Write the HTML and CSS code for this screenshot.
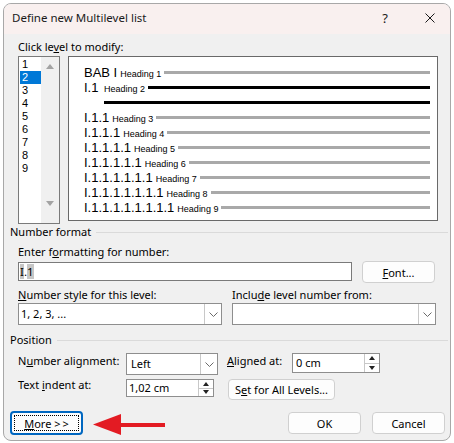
FILE: index.html
```html
<!DOCTYPE html>
<html>
<head>
<meta charset="utf-8">
<link rel="stylesheet" href="styles.css">
</head>
<body>
<div class="dialog">
  <div class="titlebar">
    <span class="title">Define new Multilevel list</span>
    <span class="help">?</span>
    <span class="close"><svg width="10" height="10" viewBox="0 0 10 10"><path d="M0.5 0.5 L9.5 9.5 M9.5 0.5 L0.5 9.5" stroke="#1a1a1a" stroke-width="1"/></svg></span>
  </div>
  <div class="body">
    <div class="lbl top-lbl">Click le<u>v</u>el to modify:</div>
    <div class="levels">
      <div class="listbox">
        <ul class="items">
          <li>1</li><li class="sel">2</li><li>3</li><li>4</li><li>5</li><li>6</li><li>7</li><li>8</li><li>9</li>
        </ul>
        <div class="scroll">
          <span class="tri up"></span>
          <span class="tri down"></span>
        </div>
      </div>
      <div class="preview">
        <div class="row"><span class="num">BAB I</span><span class="hd">Heading 1</span><i class="ln"></i></div>
        <div class="row"><span class="num n2">I.1</span><span class="hd h2">Heading 2</span><i class="ln bold"></i></div>
        <div class="row blank"><i class="ln bold"></i></div>
        <div class="row"><span class="num">I.1.1</span><span class="hd">Heading 3</span><i class="ln"></i></div>
        <div class="row"><span class="num">I.1.1.1</span><span class="hd">Heading 4</span><i class="ln"></i></div>
        <div class="row"><span class="num">I.1.1.1.1</span><span class="hd">Heading 5</span><i class="ln"></i></div>
        <div class="row"><span class="num">I.1.1.1.1.1</span><span class="hd">Heading 6</span><i class="ln"></i></div>
        <div class="row"><span class="num">I.1.1.1.1.1.1</span><span class="hd">Heading 7</span><i class="ln"></i></div>
        <div class="row"><span class="num">I.1.1.1.1.1.1.1</span><span class="hd">Heading 8</span><i class="ln"></i></div>
        <div class="row"><span class="num">I.1.1.1.1.1.1.1.1</span><span class="hd">Heading 9</span><i class="ln"></i></div>
      </div>
    </div>

    <div class="group"><span>Number format</span><i class="rule"></i></div>
    <div class="section">
      <div class="lbl gap4">Enter f<u>o</u>rmatting for number:</div>
      <div class="fmt-row">
        <div class="textbox"><span class="shade">I</span>.<span class="shade">1</span></div>
        <div class="btn font-btn"><span><u>F</u>ont...</span></div>
      </div>
      <div class="two-col gap4">
        <div class="lbl"><u>N</u>umber style for this level:</div>
        <div class="lbl">Inclu<u>d</u>e level number from:</div>
      </div>
      <div class="two-col">
        <div class="select"><span class="val">1, 2, 3, ...</span><span class="dd"><svg width="9" height="5" viewBox="0 0 9 5"><path d="M0.5 0.5 L4.5 4.5 L8.5 0.5" fill="none" stroke="#6a6a6a" stroke-width="1"/></svg></span></div>
        <div class="select"><span class="val"></span><span class="dd"><svg width="9" height="5" viewBox="0 0 9 5"><path d="M0.5 0.5 L4.5 4.5 L8.5 0.5" fill="none" stroke="#6a6a6a" stroke-width="1"/></svg></span></div>
      </div>
    </div>

    <div class="group pos-group"><span>Position</span><i class="rule"></i></div>
    <div class="section">
      <div class="pos-row r1">
        <div class="lbl plbl">N<u>u</u>mber alignment:</div>
        <div class="select align-sel"><span class="val v4">Left</span><span class="dd"><svg width="9" height="5" viewBox="0 0 9 5"><path d="M0.5 0.5 L4.5 4.5 L8.5 0.5" fill="none" stroke="#6a6a6a" stroke-width="1"/></svg></span></div>
        <div class="lbl alabel"><u>A</u>ligned at:</div>
        <div class="spin s-aligned"><span class="val">0 cm</span><span class="spn"><span class="half"><i class="stri sup"></i></span><span class="half"><i class="stri sdn"></i></span></span></div>
      </div>
      <div class="pos-row r2">
        <div class="lbl plbl short">Text <u>i</u>ndent at:</div>
        <div class="spin s-indent"><span class="val">1,02 cm</span><span class="spn"><span class="half"><i class="stri sup"></i></span><span class="half"><i class="stri sdn"></i></span></span></div>
        <div class="btn setall"><span>S<u>e</u>t for All Levels...</span></div>
      </div>
    </div>

    <div class="bottom">
      <div class="btn more"><span class="focus"><span><u>M</u>ore <span class="gt">&gt;</span>&gt;</span></span></div>
      <div class="btn ok"><span>OK</span></div>
      <div class="btn cancel"><span>Cancel</span></div>
    </div>
  </div>
</div>
<svg class="arrow" width="80" height="30" viewBox="0 0 80 30">
  <polygon points="3,14.5 31,4 31,25" fill="#e31b23"/>
  <rect x="29" y="13" width="46" height="4" fill="#e31b23"/>
</svg>
</body>
</html>
```
FILE: styles.css
```css
* { box-sizing: border-box; }
html, body { margin: 0; padding: 0; }
body {
  width: 454px;
  height: 443px;
  overflow: hidden;
  position: relative;
  background: #ffffff;
  font-family: "Noto Sans", "Segoe UI", sans-serif;
  font-size: 11px;
  color: #000;
}
u { text-decoration: underline; text-underline-offset: 1px; }

.dialog {
  margin: 3px 0 0 3px;
  width: 448px;
  height: 438px;
  border: 1px solid #a8a8a8;
  border-radius: 8px;
  background: #f0f0f0;
  overflow: hidden;
}

.titlebar {
  height: 30px;
  background: #f9f0ef;
  display: flex;
  align-items: center;
  padding: 0 5px 3px 8px;
}
.title { font-size: 11.5px; color: #1a1a1a; }
.help { margin-left: auto; width: 20px; text-align: center; font-size: 13px; color: #1a1a1a; }
.close { width: 30px; margin-left: 20px; display: flex; justify-content: center; }

.body { padding: 5px 2px 0 6px; }

.lbl { height: 16px; line-height: 16px; white-space: nowrap; }
.top-lbl { margin-left: 8px; }

.levels {
  margin-left: 8px;
  margin-top: 1px;
  height: 168px;
  display: flex;
  align-items: flex-start;
  gap: 8px;
}
.listbox {
  width: 42px;
  height: 168px;
  border: 1px solid #7a7a7a;
  background: #fff;
  display: flex;
}
.items {
  list-style: none;
  margin: 0;
  padding: 1px 0 0 1px;
  width: 22px;
}
.items li {
  height: 13px;
  line-height: 13px;
  padding-left: 2px;
  font-family: "Liberation Sans", Arial, sans-serif;
  font-size: 11px;
}
.items li.sel { background: #0078d7; color: #fff; }
.scroll {
  width: 18px;
  background: #f0f0f0;
  display: flex;
  flex-direction: column;
  justify-content: space-between;
  align-items: center;
  padding: 7px 0 17px;
}
.tri { width: 0; height: 0; border-left: 4px solid transparent; border-right: 4px solid transparent; }
.tri.up { border-bottom: 5px solid #a3a3a3; }
.tri.down { border-top: 5px solid #a3a3a3; }

.preview {
  width: 370px;
  height: 165px;
  border: 1px solid #696969;
  background: #fff;
  padding: 8px 7px 0 15px;
}
.row {
  display: flex;
  align-items: baseline;
  height: 15px;
  line-height: 15px;
  font-family: "Liberation Sans", Arial, sans-serif;
}
.num { font-size: 13px; white-space: nowrap; }
.num.n2 { width: 20px; }
.hd { font-size: 9px; margin-left: 3px; white-space: nowrap; }
.hd.h2 { margin-left: 0; }
.ln {
  flex: 1;
  align-self: center;
  height: 3px;
  margin-left: 3px;
  background: #a9a9a9;
}
.ln.bold { height: 3px; background: #000; }
.row.blank { padding-left: 20px; }
.row.blank .ln { margin-left: 0; }

.group {
  display: flex;
  align-items: center;
  height: 16px;
  line-height: 16px;
}
.rule { flex: 1; height: 1px; background: #dadada; margin-left: 5px; }
.pos-group { margin-top: 7px; }

.section { margin-left: 8px; margin-right: 10px; }
.gap4 { margin-top: 4px; }

.fmt-row { display: flex; align-items: flex-start; height: 22px; margin-top: 1px; }
.textbox {
  width: 334px;
  height: 19px;
  margin-top: 1px;
  border: 1px solid #7a7a7a;
  background: #fff;
  padding-left: 1px;
  font-size: 11.5px;
  line-height: 17px;
}
.shade { background: #c6c6c6; }

.btn {
  display: flex;
  align-items: center;
  justify-content: center;
  background: #fdfdfd;
  border: 1px solid #d0d0d0;
  border-radius: 4px;
  white-space: nowrap;
}
.font-btn { width: 73px; height: 22px; margin-left: 10px; }

.two-col { display: grid; grid-template-columns: 204px 204px; column-gap: 10px; }

.select, .spin {
  display: flex;
  background: #fff;
  border: 1px solid #8e8e8e;
}
.select { height: 22px; }
.val { flex: 1; padding-left: 2px; line-height: 20px; white-space: nowrap; }
.dd {
  width: 17px;
  border-left: 1px solid #c8c8c8;
  display: flex;
  align-items: center;
  justify-content: center;
}

.pos-row { display: flex; align-items: flex-start; }
.r1 { margin-top: 5px; height: 22px; }
.r2 { margin-top: 4px; height: 21px; }
.plbl { width: 108px; }
.plbl.short { height: 13px; line-height: 12px; }
.align-sel { width: 92px; }
.v4 { padding-left: 4px; }
.alabel { width: 65px; margin-left: 9px; line-height: 15px; }
.spin { width: 88px; }
.s-aligned { height: 20px; }
.s-aligned .val { line-height: 18px; padding-left: 3px; }
.s-indent { height: 18px; }
.s-indent .val { line-height: 16px; padding-left: 2px; }
.spn {
  width: 15px;
  border-left: 1px solid #c8c8c8;
  display: flex;
  flex-direction: column;
}
.half { flex: 1; display: flex; align-items: center; justify-content: center; }
.half + .half { border-top: 1px solid #c8c8c8; }
.stri { width: 0; height: 0; border-left: 3px solid transparent; border-right: 3px solid transparent; }
.sup { border-bottom: 4px solid #222; }
.sdn { border-top: 4px solid #222; }
.setall { width: 107px; height: 21px; margin-left: 14px; }

.bottom {
  display: flex;
  align-items: center;
  margin-top: 11px;
  padding-right: 3px;
  height: 24px;
}
.more {
  width: 73px;
  height: 24px;
  border: 2px solid #0067c0;
  padding: 2px;
}
.focus {
  flex: 1;
  align-self: stretch;
  border: 1px dotted #000;
  display: flex;
  align-items: center;
  justify-content: center;
}
.gt { letter-spacing: 2px; }
.ok { width: 73px; height: 22px; margin-left: auto; }
.cancel { width: 73px; height: 22px; margin-left: 11px; }

.arrow { position: absolute; left: 90px; top: 410px; }
```
